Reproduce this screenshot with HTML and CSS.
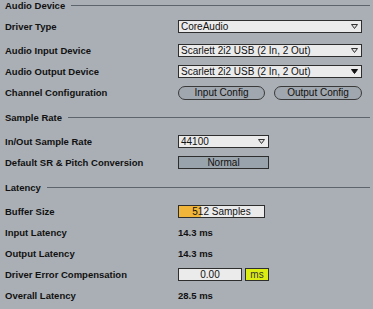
FILE: index.html
```html
<!DOCTYPE html>
<html lang="en">
<head>
    <meta charset="UTF-8">
    <title>Audio Preferences</title>
    <link rel="stylesheet" href="styles.css">
</head>
<body>
    <div class="section first">
        <div class="section-title"><span>Audio Device</span><div class="rule"></div></div>
        <div class="row row-first">
            <div class="label">Driver Type</div>
            <div class="select">
                <span>CoreAudio</span>
                <svg class="arrow" width="7" height="5" viewBox="0 0 7 5"><path d="M0.5 0.5 H6.5 L3.5 4.5 Z" fill="#dcdcdc" stroke="#333" stroke-width="1"/></svg>
            </div>
        </div>
        <div class="row row-gap">
            <div class="label">Audio Input Device</div>
            <div class="select">
                <span>Scarlett 2i2 USB (2 In, 2 Out)</span>
                <svg class="arrow" width="7" height="5" viewBox="0 0 7 5"><path d="M0.5 0.5 H6.5 L3.5 4.5 Z" fill="#dcdcdc" stroke="#333" stroke-width="1"/></svg>
            </div>
        </div>
        <div class="row">
            <div class="label">Audio Output Device</div>
            <div class="select">
                <span>Scarlett 2i2 USB (2 In, 2 Out)</span>
                <svg class="arrow" width="7" height="5" viewBox="0 0 7 5"><path d="M0.5 0.5 H6.5 L3.5 4.5 Z" fill="#111" stroke="#111" stroke-width="1"/></svg>
            </div>
        </div>
        <div class="row">
            <div class="label">Channel Configuration</div>
            <div class="buttons">
                <div class="pill">Input Config</div>
                <div class="pill">Output Config</div>
            </div>
        </div>
    </div>

    <div class="section">
        <div class="section-title"><span>Sample Rate</span><div class="rule"></div></div>
        <div class="row row-first">
            <div class="label">In/Out Sample Rate</div>
            <div class="select narrow">
                <span>44100</span>
                <svg class="arrow" width="7" height="5" viewBox="0 0 7 5"><path d="M0.5 0.5 H6.5 L3.5 4.5 Z" fill="#dcdcdc" stroke="#333" stroke-width="1"/></svg>
            </div>
        </div>
        <div class="row">
            <div class="label">Default SR &amp; Pitch Conversion</div>
            <div class="toggle">Normal</div>
        </div>
    </div>

    <div class="section">
        <div class="section-title"><span>Latency</span><div class="rule"></div></div>
        <div class="row row-first">
            <div class="label">Buffer Size</div>
            <div class="buffer">
                <div class="buffer-fill"></div>
                <span>512 Samples</span>
            </div>
        </div>
        <div class="row">
            <div class="label">Input Latency</div>
            <div class="value">14.3 ms</div>
        </div>
        <div class="row">
            <div class="label">Output Latency</div>
            <div class="value">14.3 ms</div>
        </div>
        <div class="row">
            <div class="label">Driver Error Compensation</div>
            <div class="number">0.00</div>
            <div class="unit">ms</div>
        </div>
        <div class="row">
            <div class="label">Overall Latency</div>
            <div class="value">28.5 ms</div>
        </div>
    </div>
</body>
</html>
```

FILE: styles.css
```css
body {
    margin: 0;
    padding: 0 3px 0 5px;
    background: #a9afb5;
    font-family: 'Liberation Sans', Arial, sans-serif;
    color: #111;
}

.section {
    margin-top: 9px;
}

.section.first {
    margin-top: 0;
}

.section-title {
    display: flex;
    align-items: center;
    height: 11px;
    font-size: 9.5px;
    font-weight: bold;
}

.section-title .rule {
    flex: 1;
    height: 1px;
    margin-left: 6px;
    background: #5d646b;
}

.row {
    display: flex;
    align-items: center;
    height: 21px;
}

.row-first {
    margin-top: 8px;
}

.first .row-first {
    margin-top: 5px;
}

.row-gap {
    margin-top: 3px;
}

.label {
    width: 173px;
    font-size: 9.5px;
    font-weight: bold;
}

.select {
    position: relative;
    box-sizing: border-box;
    width: 184px;
    height: 13px;
    border: 1px solid #2e2e2e;
    background: #ebebeb;
    font-size: 10px;
    line-height: 11px;
    padding-left: 2px;
}

.select.narrow {
    width: 91px;
}

.arrow {
    position: absolute;
    right: 3px;
    top: 3px;
}

.buttons {
    display: flex;
    gap: 9px;
}

.pill {
    box-sizing: border-box;
    height: 14px;
    border: 1px solid #3a3a3a;
    border-radius: 7px;
    background: #a0a7ae;
    font-size: 10px;
    line-height: 12px;
    text-align: center;
}

.pill:first-child {
    width: 87px;
}

.pill:last-child {
    width: 88px;
}

.toggle {
    box-sizing: border-box;
    width: 91px;
    height: 13px;
    border: 1px solid #2e2e2e;
    background: #99a3ac;
    font-size: 10px;
    line-height: 11px;
    text-align: center;
}

.buffer {
    position: relative;
    box-sizing: border-box;
    width: 87px;
    height: 13px;
    border: 1px solid #2e2e2e;
    background: #ebebeb;
    font-size: 10px;
    line-height: 11px;
    text-align: center;
}

.buffer-fill {
    position: absolute;
    left: 0;
    top: 0;
    bottom: 0;
    width: 22px;
    background: #f1b53a;
}

.buffer span {
    position: relative;
}

.value {
    font-size: 9.5px;
    font-weight: bold;
}

.number {
    box-sizing: border-box;
    width: 64px;
    height: 13px;
    border: 1px solid #2e2e2e;
    background: #ebebeb;
    font-size: 10px;
    line-height: 11px;
    text-align: center;
}

.unit {
    box-sizing: border-box;
    width: 24px;
    height: 13px;
    margin-left: 3px;
    border: 1px solid #2e2e2e;
    background: #dced14;
    font-size: 10px;
    line-height: 11px;
    text-align: center;
    color: #333;
}
```
